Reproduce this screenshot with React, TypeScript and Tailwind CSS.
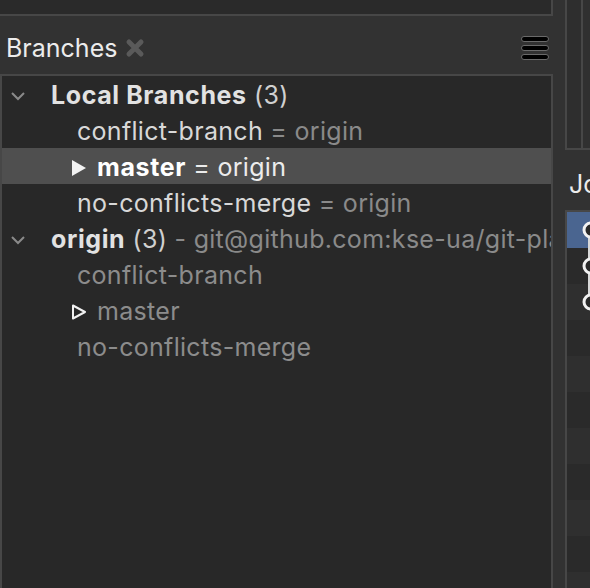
import React from 'react'

const FONT = { fontFamily: 'Inter, "Noto Sans", sans-serif' }

function Chevron() {
    return (
        <svg width="16" height="10" viewBox="0 0 16 10" className="shrink-0">
            <path d="M2 2 L8 8 L14 2" fill="none" stroke="#8a8a8a" strokeWidth="2" />
        </svg>
    )
}

function Triangle({ filled }: { filled: boolean }) {
    return (
        <svg width="16" height="18" viewBox="0 0 16 18" className="shrink-0">
            {filled ? (
                <path d="M1 1 L15 9 L1 17 Z" fill="#f2f2f2" />
            ) : (
                <path d="M2 2.5 L14 9 L2 15.5 Z" fill="none" stroke="#f2f2f2" strokeWidth="2" strokeLinejoin="round" />
            )}
        </svg>
    )
}

function CloseX() {
    return (
        <svg width="20" height="20" viewBox="0 0 20 20" className="shrink-0">
            <path d="M4 4 L16 16 M16 4 L4 16" stroke="#5a5a5a" strokeWidth="5" strokeLinecap="round" />
        </svg>
    )
}

function Hamburger() {
    return (
        <div className="flex flex-col gap-[3px]">
            {[0, 1, 2].map((i) => (
                <div key={i} className="h-[6px] w-[28px] rounded-[3px] border border-[#6a6a6a] bg-black" />
            ))}
        </div>
    )
}

type Row = {
    indent: 'group' | 'child'
    selected?: boolean
    marker?: 'filled' | 'outline'
    name: string
    bold?: boolean
    nameColor: string
    suffix?: string
    suffixColor?: string
    extra?: string
}

const ROWS: Row[] = [
    { indent: 'group', name: 'Local Branches', bold: true, nameColor: '#e2e2e2', suffix: '(3)', suffixColor: '#d0d0d0' },
    { indent: 'child', name: 'conflict-branch', nameColor: '#d8d8d8', suffix: '= origin', suffixColor: '#8a8a8a' },
    { indent: 'child', selected: true, marker: 'filled', name: 'master', bold: true, nameColor: '#ffffff', suffix: '= origin', suffixColor: '#ececec' },
    { indent: 'child', name: 'no-conflicts-merge', nameColor: '#d8d8d8', suffix: '= origin', suffixColor: '#8a8a8a' },
    { indent: 'group', name: 'origin', bold: true, nameColor: '#e2e2e2', suffix: '(3)', suffixColor: '#d0d0d0', extra: '- git@github.com:kse-ua/git-playground.git' },
    { indent: 'child', name: 'conflict-branch', nameColor: '#8c8c8c' },
    { indent: 'child', marker: 'outline', name: 'master', nameColor: '#8c8c8c' },
    { indent: 'child', name: 'no-conflicts-merge', nameColor: '#8c8c8c' },
]

function TreeRow({ row }: { row: Row }) {
    return (
        <div
            className={`flex h-[36px] items-center overflow-hidden whitespace-nowrap pt-[3px] text-[25px] leading-none tracking-[0.3px] ${row.selected ? 'bg-[#4f4f4f]' : ''}`}
        >
            {row.indent === 'group' ? (
                <div className="ml-[8px] w-[41px] shrink-0">
                    <Chevron />
                </div>
            ) : row.marker ? (
                <div className="ml-[69px] w-[26px] shrink-0">
                    <Triangle filled={row.marker === 'filled'} />
                </div>
            ) : (
                <div className="w-[75px] shrink-0" />
            )}
            <span className={row.bold ? 'font-bold tracking-[0.6px]' : ''} style={{ color: row.nameColor }}>
                {row.name}
            </span>
            {row.suffix && <span style={{ color: row.suffixColor }}>&nbsp;{row.suffix}</span>}
            {row.extra && <span className="text-[#8a8a8a]">&nbsp;{row.extra}</span>}
        </div>
    )
}

export default function App() {
    const tableRows = Array.from({ length: 11 })
    return (
        <div className="flex h-[588px] w-[590px] overflow-hidden bg-[#323232]" style={FONT}>
            <div className="flex w-[553px] shrink-0 flex-col">
                <div className="h-[16px] shrink-0 border-b-2 border-r-2 border-[#474747] bg-[#2a2a2a]" />
                <div className="flex h-[58px] shrink-0 items-center justify-between pl-[6px] pr-[4px] pt-[6px]">
                    <div className="flex items-center gap-[8px]">
                        <span className="text-[25px] leading-none text-[#ececec]">Branches</span>
                        <CloseX />
                    </div>
                    <Hamburger />
                </div>
                <div className="flex-1 overflow-hidden border-l-2 border-r-2 border-t-2 border-[#474747] bg-[#282828]">
                    {ROWS.map((r, i) => (
                        <TreeRow key={i} row={r} />
                    ))}
                </div>
            </div>
            <div className="ml-[12px] flex flex-1 flex-col overflow-hidden">
                <div className="flex h-[150px] shrink-0 border-b-2 border-l-2 border-[#474747]">
                    <div className="w-[16px] border-r-2 border-[#474747] bg-[#2e2e2e]" />
                    <div className="flex-1 bg-[#303030]" />
                </div>
                <div className="flex h-[60px] shrink-0 items-center whitespace-nowrap pl-[4px] pt-[10px] text-[25px] text-[#ececec]">Jobs</div>
                <div className="relative flex-1 border-l-2 border-[#474747]">
                    <div className="h-[2px] bg-[#474747]" />
                    {tableRows.map((_, i) => (
                        <div
                            key={i}
                            className={`h-[36px] ${i === 0 ? 'bg-[#4a6590]' : i % 2 === 1 ? 'bg-[#2a2a2a]' : 'bg-[#2f2f2f]'}`}
                        />
                    ))}
                    <svg className="absolute left-[14px] top-[2px]" width="20" height="110" viewBox="0 0 20 110">
                        <line x1="8" y1="18" x2="8" y2="90" stroke="#d8d8d8" strokeWidth="2" />
                        {[18, 54, 90].map((cy) => (
                            <circle key={cy} cx="10" cy={cy} r="7" fill="#2a2a2a" stroke="#f2f2f2" strokeWidth="3" />
                        ))}
                    </svg>
                </div>
            </div>
        </div>
    )
}
